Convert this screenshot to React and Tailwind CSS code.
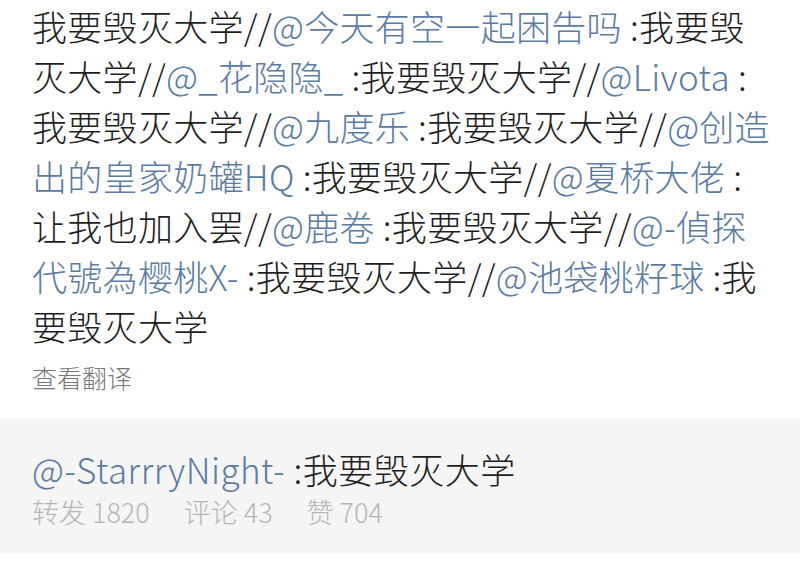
import React from 'react';

const FONT = { fontFamily: '"Noto Sans CJK SC", "Noto Sans", sans-serif' };

// each line of the repost chain, split into [text, isMention]
const lines = [
  [['我要毁灭大学//', false], ['@今天有空一起困告吗', true], [' :我要毁', false]],
  [['灭大学//', false], ['@_花隐隐_', true], [' :我要毁灭大学//', false], ['@Livota', true], [' :', false]],
  [['我要毁灭大学//', false], ['@九度乐', true], [' :我要毁灭大学//', false], ['@创造', true]],
  [['出的皇家奶罐HQ', true], [' :我要毁灭大学//', false], ['@夏桥大佬', true], [' :', false]],
  [['让我也加入罢//', false], ['@鹿卷', true], [' :我要毁灭大学//', false], ['@-偵探', true]],
  [['代號為樱桃X-', true], [' :我要毁灭大学//', false], ['@池袋桃籽球', true], [' :我', false]],
  [['要毁灭大学', false]],
];

const stats = [
  { label: '转发', count: 1820 },
  { label: '评论', count: 43 },
  { label: '赞', count: 704 },
];

export default function App() {
  return (
    <div className="w-[800px] h-[581px] bg-white overflow-hidden" style={FONT}>
      {/* repost chain */}
      <div className="pl-8 pr-6 pt-[1px] text-[35px] leading-[50px] tracking-[0.3px] font-light text-[#1f1f1f]">
        {lines.map((line, i) => (
          <div key={i} className="whitespace-pre">
            {line.map(([text, mention], j) =>
              mention ? (
                <span key={j} className="text-[#5a7ca6]">{text}</span>
              ) : (
                <span key={j}>{text}</span>
              )
            )}
          </div>
        ))}
      </div>

      <div className="pl-8 mt-[11px] text-[25px] leading-[30px] text-[#777] font-light">查看翻译</div>

      {/* original post card */}
      <div className="mt-[27px] h-[134px] bg-[#f5f5f5] pl-8 pt-[25px]">
        <div className="text-[35px] leading-[50px] tracking-[0.5px] font-light text-[#1f1f1f] whitespace-pre">
          <span className="text-[#5a7ca6]">@-StarrryNight-</span> :我要毁灭大学
        </div>
        <div className="flex gap-[34px] text-[27px] leading-[36px] text-[#b5b5b5] font-light">
          {stats.map((s) => (
            <span key={s.label}>
              {s.label} {s.count}
            </span>
          ))}
        </div>
      </div>
    </div>
  );
}
